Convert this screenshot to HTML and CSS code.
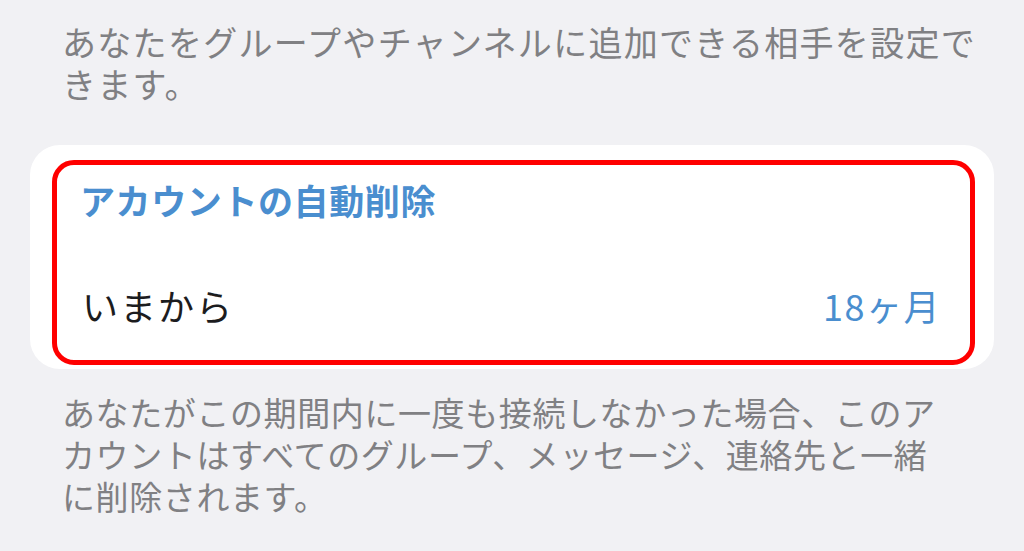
FILE: index.html
```html
<!DOCTYPE html>
<html lang="ja">
<head>
<meta charset="utf-8">
<link rel="stylesheet" href="styles.css">
</head>
<body>
<div class="page">
  <p class="note note-top">あなたをグループやチャンネルに追加できる相手を設定で<br>きます。</p>
  <div class="card">
    <div class="highlight">
      <div class="title">アカウントの自動削除</div>
      <div class="row">
        <span class="label">いまから</span>
        <span class="value">18ヶ月</span>
      </div>
    </div>
  </div>
  <p class="note note-bottom">あなたがこの期間内に一度も接続しなかった場合、このア<br>カウントはすべてのグループ、メッセージ、連絡先と一緒<br>に削除されます。</p>
</div>
</body>
</html>
```
FILE: styles.css
```css
html, body {
  margin: 0;
  padding: 0;
  background: #f1f1f4;
  width: 1024px;
  height: 551px;
  overflow: hidden;
}
.page {
  font-family: "Noto Sans CJK JP", "Noto Sans", sans-serif;
  padding: 21px 0 0 0;
}
.note {
  margin: 0;
  color: #808083;
  font-size: 34px;
  line-height: 42px;
}
.note-top {
  padding-left: 62px;
  letter-spacing: 1.3px;
}
.card {
  margin: 40px 30px 0 30px;
  background: #ffffff;
  border-radius: 30px;
  padding: 15px 19px 4px 22px;
}
.highlight {
  border: 5px solid #ff0000;
  border-radius: 22px;
  padding: 13px 29px 33px 23px;
  display: flex;
  flex-direction: column;
  gap: 61px;
}
.title {
  color: #4a8ecf;
  font-weight: 700;
  font-size: 35px;
  line-height: 44px;
  letter-spacing: 0.6px;
}
.row {
  display: flex;
  justify-content: space-between;
  align-items: baseline;
  font-size: 36px;
  line-height: 44px;
}
.label {
  color: #1c1c1e;
  letter-spacing: 2px;
  padding-left: 2px;
}
.value {
  color: #4a8ecf;
  letter-spacing: 1.5px;
}
.note-bottom {
  padding-left: 62px;
  margin-top: 22px;
  font-size: 33px;
  line-height: 42px;
  letter-spacing: 0.6px;
}
```
